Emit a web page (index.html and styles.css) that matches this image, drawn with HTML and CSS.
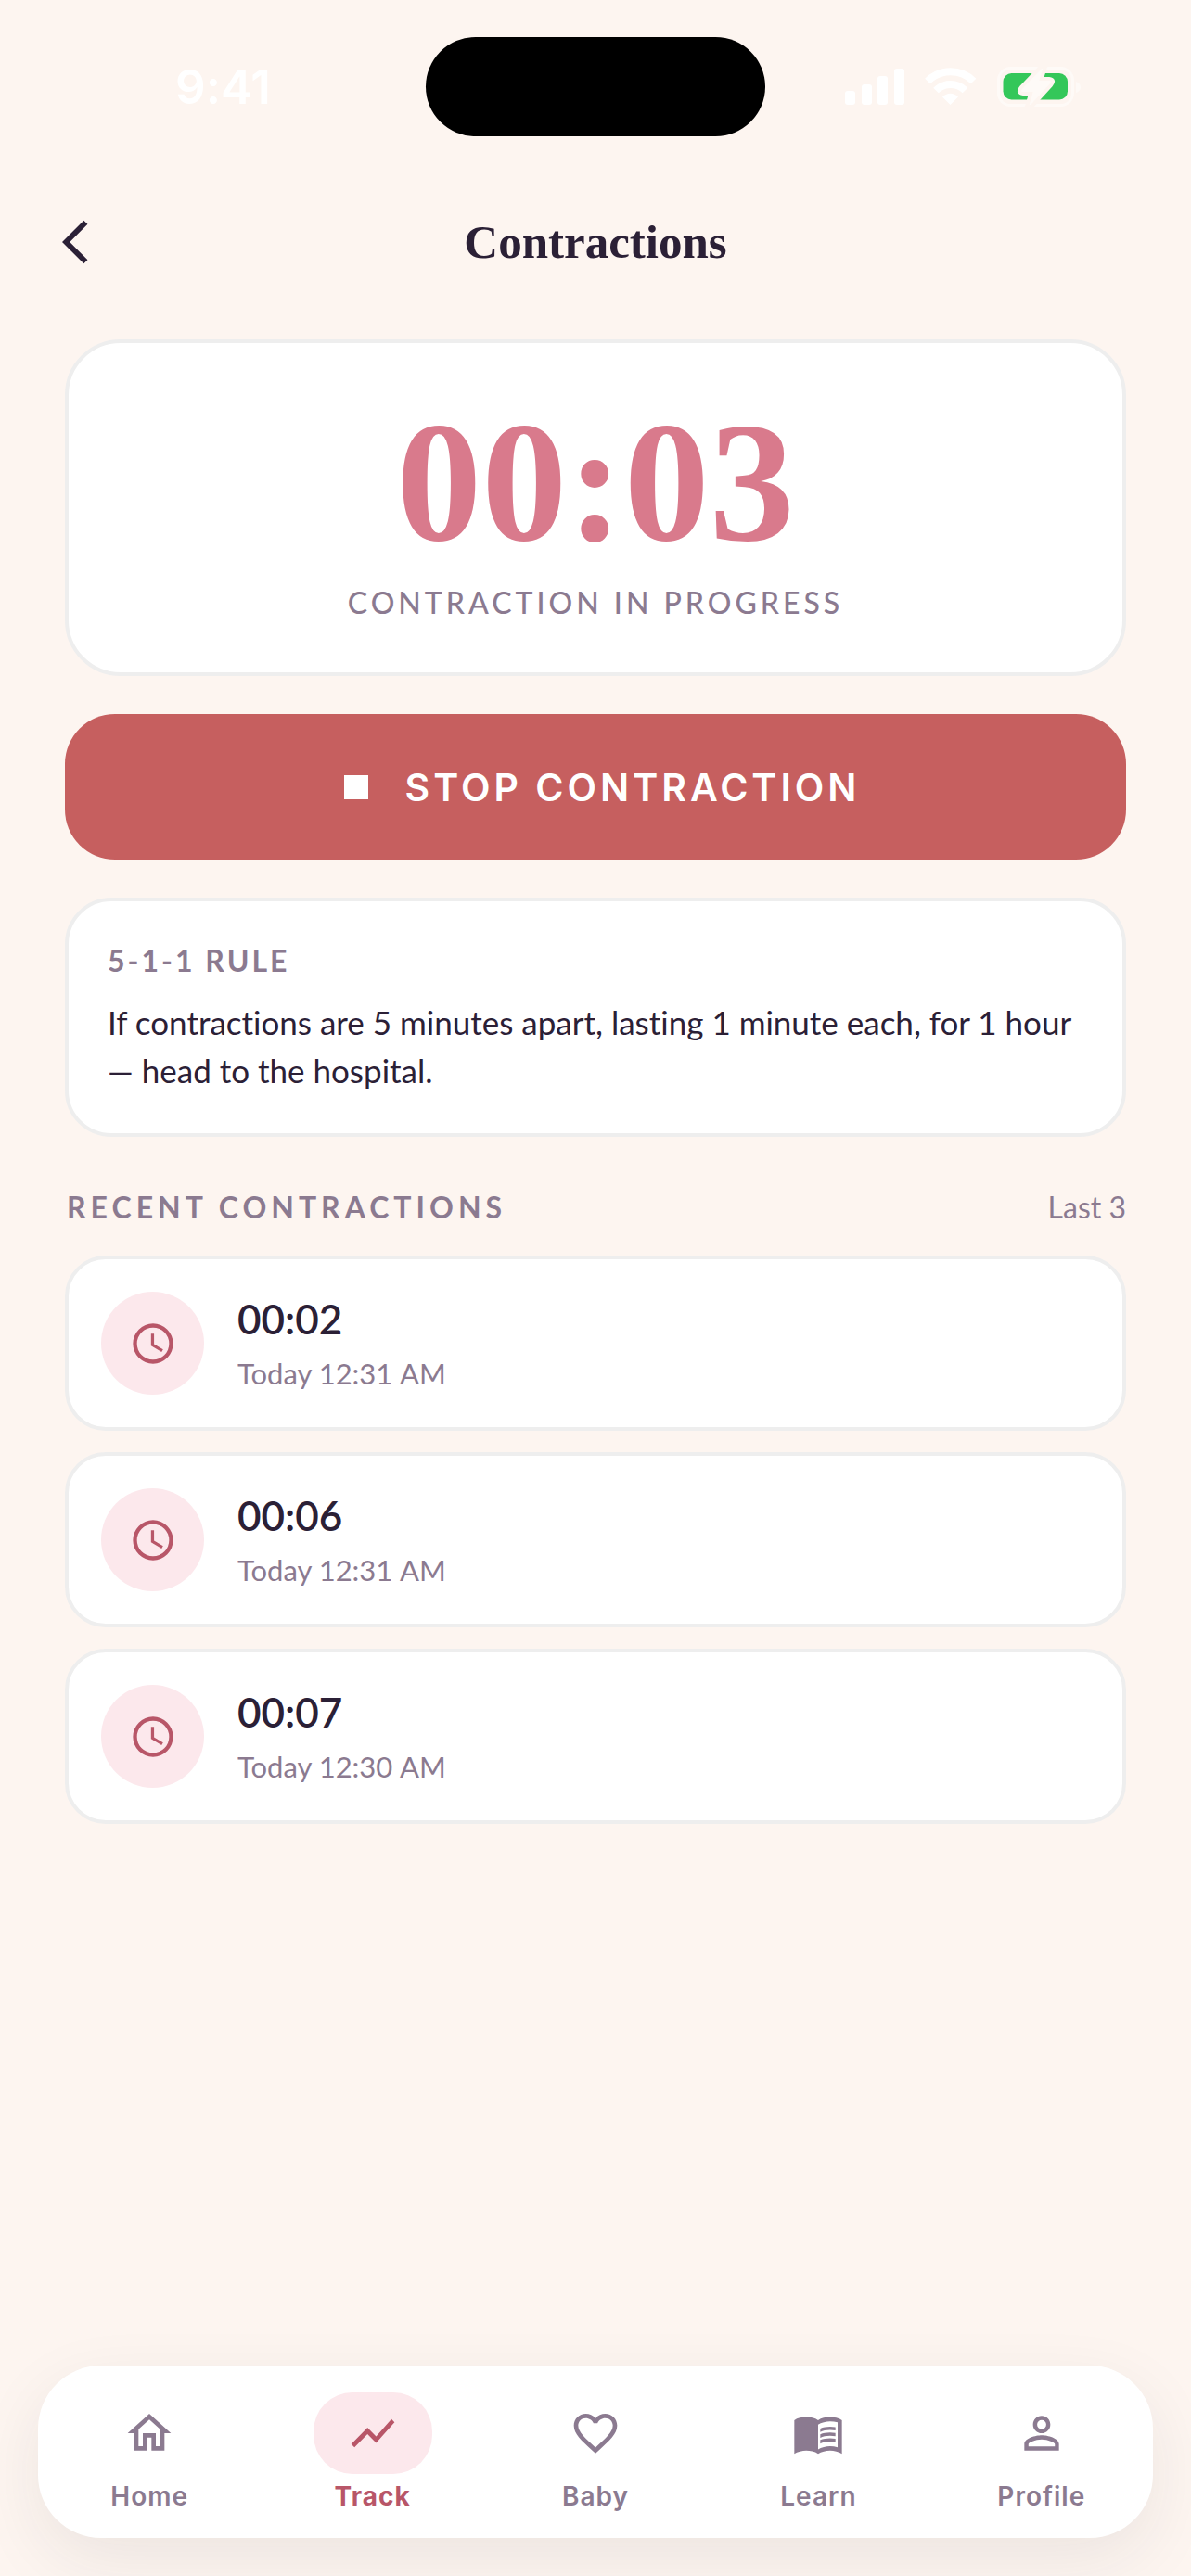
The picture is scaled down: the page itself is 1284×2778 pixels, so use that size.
FILE: index.html
```html
<!DOCTYPE html>
<html lang="en">
<head>
    <meta charset="UTF-8">
    <meta name="viewport" content="width=device-width, initial-scale=1.0">
    <title>Contractions</title>
    <link rel="stylesheet" href="styles.css">
</head>
<body>

<div class="status-bar">
    <span class="status-time">9:41</span>
    <div class="island"></div>
    <svg class="status-icons" width="260" height="44" viewBox="908 72 260 44" aria-hidden="true">
        <g fill="#fff">
            <rect x="911" y="98" width="11" height="15" rx="3"/>
            <rect x="929" y="91" width="11" height="22" rx="3"/>
            <rect x="946" y="82" width="11" height="31" rx="3"/>
            <rect x="964" y="74" width="11" height="39" rx="3"/>
            <path d="M1024.500 113l-8.500-8.500q8.500-7.500 17 0z"/>
        </g>
        <g fill="none" stroke="#fff" stroke-width="8">
            <path d="M1000 87.500a35 35 0 0 1 49.500 0"/>
            <path d="M1009 97.500a22.500 22.500 0 0 1 31.500 0"/>
        </g>
        <rect x="1076.500" y="73.500" width="80" height="40" rx="13" fill="none" stroke="#fefaf7" stroke-width="3"/>
        <path d="M1160 88q5 2 5 6t-5 6z" fill="#fefaf7"/>
        <rect x="1081.500" y="79" width="69.500" height="28.500" rx="9" fill="#34c759"/>
        <path d="M1122 72l-21 22q-5 6 2 7h8l-4 14h5l21-23q5-6-2-7h-8l4-13z" fill="#fefaf7" stroke="#fdf5f0" stroke-width="4"/>
    </svg>
</div>

<header class="top-bar">
    <button type="button" class="back" aria-label="Back">
        <svg class="icon" viewBox="0 0 24 24"><path d="M17.770 3.770 16 2 6 12l10 10 1.770-1.770L9.540 12z"/></svg>
    </button>
    <h1>Contractions</h1>
</header>

<main>
    <section class="card timer-card">
        <div class="timer">00:03</div>
        <p class="timer-label">CONTRACTION IN PROGRESS</p>
    </section>

    <button type="button" class="stop-button"><span class="stop-square"></span>STOP CONTRACTION</button>

    <section class="card rule-card">
        <h2>5-1-1 RULE</h2>
        <p>If contractions are 5 minutes apart, lasting 1 minute each, for 1 hour — head to the hospital.</p>
    </section>

    <div class="list-header">
        <h2>RECENT CONTRACTIONS</h2>
        <span>Last 3</span>
    </div>

    <ul class="list">
        <li class="card row">
            <span class="row-icon"><svg viewBox="0 0 24 24"><path d="M12 2a10 10 0 1 0 0 20 10 10 0 0 0 0-20zm0 18a8 8 0 1 1 0-16 8 8 0 0 1 0 16zM12.500 7H11v6l5.250 3.150.75-1.230-4.500-2.670z"/></svg></span>
            <div>
                <div class="duration">00:02</div>
                <div class="when">Today 12:31&#8239;AM</div>
            </div>
        </li>
        <li class="card row">
            <span class="row-icon"><svg viewBox="0 0 24 24"><path d="M12 2a10 10 0 1 0 0 20 10 10 0 0 0 0-20zm0 18a8 8 0 1 1 0-16 8 8 0 0 1 0 16zM12.500 7H11v6l5.250 3.150.75-1.230-4.500-2.670z"/></svg></span>
            <div>
                <div class="duration">00:06</div>
                <div class="when">Today 12:31&#8239;AM</div>
            </div>
        </li>
        <li class="card row">
            <span class="row-icon"><svg viewBox="0 0 24 24"><path d="M12 2a10 10 0 1 0 0 20 10 10 0 0 0 0-20zm0 18a8 8 0 1 1 0-16 8 8 0 0 1 0 16zM12.500 7H11v6l5.250 3.150.75-1.230-4.500-2.670z"/></svg></span>
            <div>
                <div class="duration">00:07</div>
                <div class="when">Today 12:30&#8239;AM</div>
            </div>
        </li>
    </ul>
</main>

<nav class="tab-bar">
    <a href="#home" class="tab">
        <span class="tab-icon"><svg class="icon" viewBox="0 0 24 24"><path d="M12 5.690l5 4.500V18h-2v-6H9v6H7v-7.810l5-4.500M12 3L2 12h3v8h6v-6h2v6h6v-8h3L12 3z"/></svg></span>
        Home
    </a>
    <a href="#track" class="tab active" aria-current="page">
        <span class="tab-icon"><svg class="icon" viewBox="0 0 24 24"><path d="M3.500 18.490l6-6.010 4 4L22 6.920l-1.410-1.410-7.090 7.970-4-4L2 16.990z"/></svg></span>
        Track
    </a>
    <a href="#baby" class="tab">
        <span class="tab-icon"><svg class="icon" viewBox="0 0 24 24"><path d="M16.500 3c-1.740 0-3.410.81-4.500 2.090C10.910 3.810 9.240 3 7.500 3 4.420 3 2 5.420 2 8.500c0 3.780 3.400 6.860 8.550 11.540L12 21.350l1.450-1.320C18.600 15.360 22 12.280 22 8.500 22 5.420 19.580 3 16.500 3zm-4.400 15.550l-.1.1-.1-.1C7.140 14.240 4 11.390 4 8.500 4 6.500 5.500 5 7.500 5c1.540 0 3.040.99 3.570 2.360h1.870C13.460 5.990 14.960 5 16.500 5c2 0 3.500 1.500 3.500 3.500 0 2.890-3.140 5.740-7.900 10.050z"/></svg></span>
        Baby
    </a>
    <a href="#learn" class="tab">
        <span class="tab-icon"><svg class="icon" viewBox="0 0 24 24"><path d="M17.500 4.500c-1.950 0-4.050.4-5.500 1.500-1.450-1.100-3.550-1.500-5.500-1.500S2.450 4.900 1 6v15.500c1.350-.85 3.800-1.500 5.500-1.500s4.050.4 5.500 1.500c1.350-.85 3.800-1.500 5.500-1.500 1.900 0 4 .5 5.500 1.500V6c-1.490-1.120-3.630-1.500-5.500-1.500zm3.500 14c-1.100-.35-2.300-.5-3.500-.5-1.700 0-4.150.65-5.500 1.500V8c1.350-.85 3.800-1.500 5.500-1.500 1.200 0 2.400.15 3.500.5v11.500z"/><path d="M17.500 10.500c.88 0 1.730.09 2.500.26V9.240c-.79-.15-1.640-.24-2.500-.24-1.700 0-3.240.29-4.500.83v1.660c1.130-.64 2.700-.99 4.500-.99zM13 12.490v1.660c1.130-.64 2.700-.99 4.500-.99.88 0 1.730.09 2.500.26V11.900c-.79-.15-1.640-.24-2.500-.24-1.700 0-3.240.3-4.500.83zm4.500 1.840c-1.700 0-3.240.29-4.500.83v1.660c1.130-.64 2.700-.99 4.500-.99.88 0 1.730.09 2.500.26v-1.520c-.79-.16-1.640-.24-2.500-.24z"/></svg></span>
        Learn
    </a>
    <a href="#profile" class="tab">
        <span class="tab-icon"><svg class="icon" viewBox="0 0 24 24"><path d="M12 5.900a2.100 2.100 0 1 1 0 4.200 2.100 2.100 0 0 1 0-4.200m0 9c2.970 0 6.100 1.460 6.100 2.100v1.100H5.900V17c0-.64 3.130-2.100 6.100-2.100M12 4C9.790 4 8 5.790 8 8s1.790 4 4 4 4-1.790 4-4-1.790-4-4-4zm0 9c-2.670 0-8 1.340-8 4v3h16v-3c0-2.660-5.330-4-8-4z"/></svg></span>
        Profile
    </a>
</nav>

</body>
</html>
```
FILE: styles.css
```css
* {
    box-sizing: border-box;
}
body {
    display: flex;
    flex-direction: column;
    min-height: 100vh;
    margin: 0;
    background-color: #fdf5f0;
    color: #2b2036;
    font-family: Lato, sans-serif;
    font-size: 35px;
    font-variant-ligatures: none;
}
h1, h2, p, ul {
    margin: 0;
    padding: 0;
}
button {
    border: none;
    font: inherit;
    cursor: pointer;
}
.icon {
    display: block;
    width: 56px;
    height: 56px;
    fill: currentColor;
}

/* Status bar */
.status-bar {
    display: grid;
    grid-template-columns: 1fr auto 1fr;
    align-items: center;
    justify-items: center;
    padding-top: 40px;
    color: #fff;
}
.status-time {
    padding-left: 22px;
    font-family: Inter, sans-serif;
    font-size: 51px;
    font-weight: 600;
    line-height: 60px;
}
.island {
    width: 366px;
    height: 107px;
    border-radius: 54px;
    background-color: #000;
}
.status-icons {
    margin-right: 34px;
}

/* Header */
.top-bar {
    display: grid;
    grid-template-columns: 1fr auto 1fr;
    align-items: center;
    padding: 66px 53px 57px;
}
.back {
    justify-self: start;
    padding: 20px 0;
    background: none;
    color: #2b2036;
}
h1 {
    font-family: "Liberation Serif", serif;
    font-size: 51px;
    font-weight: 700;
    line-height: 60px;
}

/* Content */
main {
    padding: 0 70px 60px;
}
.card {
    border: 4px solid #eee;
    background-color: #fff;
}
.timer-card {
    padding: 58px 40px 55px;
    border-radius: 60px;
    text-align: center;
}
.timer {
    color: #d97a8c;
    font-family: "Liberation Serif", serif;
    font-size: 184px;
    font-weight: 700;
    line-height: 184px;
}
.timer-label {
    margin-top: 18px;
    color: #8b7a90;
    font-size: 32px;
    font-weight: 500;
    letter-spacing: 4px;
    line-height: 40px;
}
.stop-button {
    display: flex;
    align-items: center;
    justify-content: center;
    gap: 40px;
    width: 100%;
    height: 157px;
    margin: 41px 0;
    padding: 0 0 0 14px;
    border-radius: 54px;
    background-color: #c65f5f;
    color: #fff;
    font-family: Inter, sans-serif;
    font-size: 41px;
    font-weight: 600;
    letter-spacing: 4px;
}
.stop-square {
    width: 26px;
    height: 26px;
    background-color: #fff;
}
.rule-card {
    padding: 44px 42px 42px;
    border-radius: 50px;
}
h2 {
    color: #8b7a90;
    font-size: 32px;
    font-weight: 700;
    letter-spacing: 3px;
    line-height: 40px;
}
.rule-card p {
    margin-top: 20px;
    line-height: 52px;
}
.list-header {
    display: flex;
    align-items: center;
    justify-content: space-between;
    padding: 56px 0 32px 2px;
    color: #8b7a90;
    font-size: 32px;
    line-height: 40px;
}
.list-header h2 {
    letter-spacing: 5px;
}
.list {
    display: flex;
    flex-direction: column;
    gap: 23px;
    list-style: none;
}
.row {
    display: flex;
    align-items: center;
    gap: 36px;
    padding: 35px;
    border-radius: 44px;
}
.row-icon {
    display: flex;
    align-items: center;
    justify-content: center;
    width: 111px;
    height: 111px;
    border-radius: 50%;
    background-color: #fce8ec;
}
.row-icon svg {
    width: 52px;
    height: 52px;
    fill: #b85668;
}
.duration {
    padding-top: 2px;
    font-size: 44px;
    font-weight: 600;
    line-height: 52px;
}
.when {
    margin-top: 10px;
    color: #8b7a90;
    font-size: 31px;
    line-height: 46px;
}

/* Bottom navigation */
.tab-bar {
    display: grid;
    grid-template-columns: repeat(5, 1fr);
    margin: auto 41px 41px;
    padding: 29px 0 27px;
    border-radius: 68px;
    background-color: #fff;
    box-shadow: 0 24px 72px rgba(43, 32, 54, 0.08);
}
.tab {
    display: flex;
    flex-direction: column;
    align-items: center;
    gap: 6px;
    color: #8b7a90;
    font-family: Inter, sans-serif;
    font-size: 28px;
    font-weight: 600;
    letter-spacing: 1px;
    line-height: 36px;
    text-decoration: none;
}
.tab-icon {
    padding: 16px 36px;
    border-radius: 42px;
}
.active {
    color: #b85668;
    font-weight: 700;
}
.active .tab-icon {
    background-color: #fce8ec;
}
```
